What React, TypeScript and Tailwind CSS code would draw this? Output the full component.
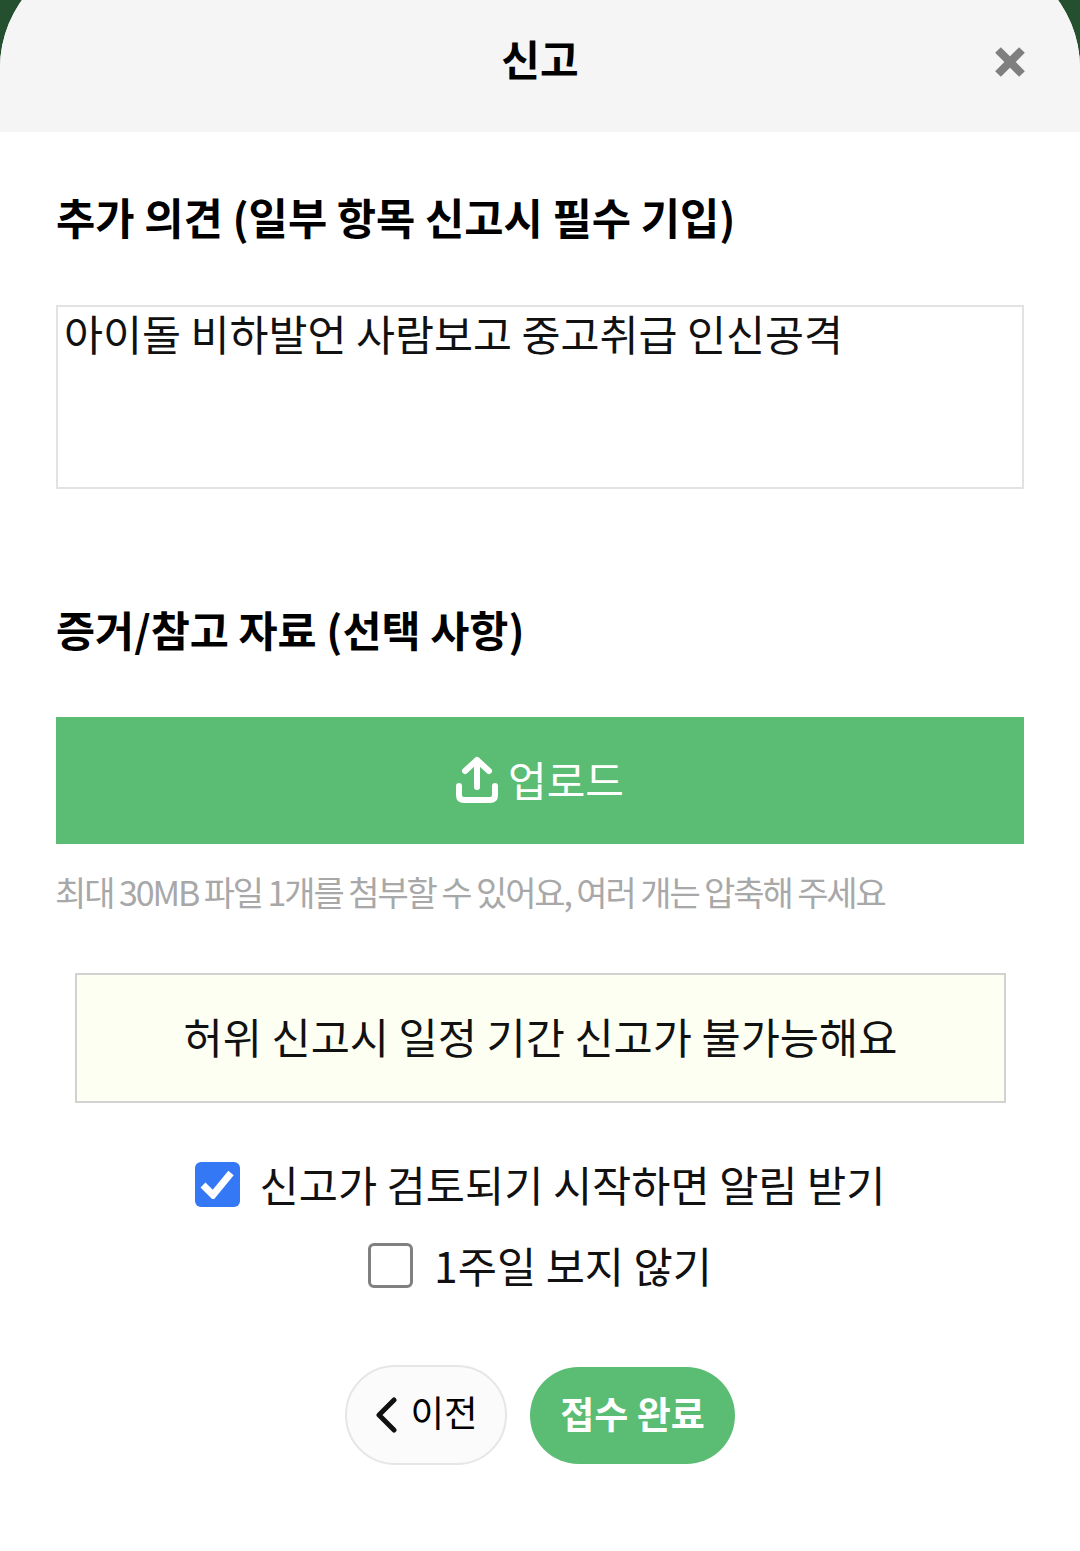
import React from "react";

export default function App() {
  return (
    <div className="w-[1080px] h-[1551px] overflow-hidden bg-[#24502f] font-['Noto_Sans_CJK_KR',sans-serif] text-black">
      <div className="-mt-[48px] h-[1599px] rounded-t-[116px] overflow-hidden bg-white flex flex-col">
        <header className="relative h-[180px] shrink-0 bg-[#f5f5f5] flex items-end justify-center pb-[46px]">
          <h1 className="text-[42px] leading-[56px] font-bold">신고</h1>
          <svg className="absolute left-[994px] top-[94px]" width="32" height="32" viewBox="0 0 32 32" fill="none">
            <path d="M4 4 L28 28 M28 4 L4 28" stroke="#7f7f7f" strokeWidth="8" />
          </svg>
        </header>

        <main className="flex flex-col px-[56px]">
          <h2 className="mt-[54px] text-[42.7px] leading-[60px] font-bold">추가 의견 (일부 항목 신고시 필수 기입)</h2>
          <div className="mt-[59px] h-[184px] border-2 border-[#e2e2e2] pl-[6px] pb-[2px] text-[42.4px] leading-[52px] text-[#111]">아이돌 비하발언 사람보고 중고취급 인신공격</div>

          <h2 className="mt-[110px] text-[42.5px] leading-[60px] font-bold">증거/참고 자료 (선택 사항)</h2>
          <button className="mt-[58px] h-[127px] bg-[#5abd73] text-white flex items-center justify-center gap-[10px] text-[42px]">
            <svg className="-mt-[2px]" width="42" height="48" viewBox="0 0 42 48" fill="none" stroke="#fff" strokeWidth="6" strokeLinecap="round" strokeLinejoin="round">
              <path d="M21 31 V4 M9 15 L21 4 L33 15" />
              <path d="M3 30 V39 Q3 44 8 44 H34 Q39 44 39 39 V30" />
            </svg>
            <span className="pb-[4px]">업로드</span>
          </button>
          <p className="mt-[24px] -ml-[1px] text-[34px] leading-[48px] tracking-[-2.1px] text-[#a8a8a8]">최대 30MB 파일 1개를 첨부할 수 있어요, 여러 개는 압축해 주세요</p>

          <div className="mt-[57px] ml-[19px] w-[931px] h-[130px] border-2 border-[#d2d2d2] bg-[#fdfff2] flex items-center justify-center pb-[4px] text-[42.6px] text-[#111]">허위 신고시 일정 기간 신고가 불가능해요</div>

          <div className="mt-[53px] flex items-center justify-center gap-[20px] h-[56px] text-[42.6px] text-[#111]">
            <span className="w-[45px] h-[45px] rounded-[6px] bg-[#3478f6] flex items-center justify-center">
              <svg width="34" height="30" viewBox="0 0 34 30" fill="none" stroke="#fff" strokeWidth="7">
                <path d="M3 16 L13 26 L31 4" />
              </svg>
            </span>
            <span>신고가 검토되기 시작하면 알림 받기</span>
          </div>
          <div className="mt-[25px] flex items-center justify-center gap-[21px] h-[56px] text-[42.6px] text-[#111]">
            <span className="w-[45px] h-[45px] rounded-[6px] border-[3px] border-[#808080] bg-white"></span>
            <span>1주일 보지 않기</span>
          </div>

          <div className="mt-[72px] flex items-start justify-center gap-[23px]">
            <button className="w-[162px] h-[100px] rounded-full border-2 border-[#e6e6e6] bg-[#fbfbfb] flex items-center justify-center gap-[12px] text-[36.5px]">
              <svg width="24" height="36" viewBox="0 0 24 36" fill="none" stroke="#111" strokeWidth="5" strokeLinecap="round" strokeLinejoin="round">
                <path d="M20 3 L5 18 L20 33" />
              </svg>
              <span className="pb-[6px]">이전</span>
            </button>
            <button className="w-[205px] h-[97px] mt-[2px] rounded-full bg-[#5abd73] text-white text-[37px] font-bold pb-[4px]">접수 완료</button>
          </div>
        </main>
      </div>
    </div>
  );
}
